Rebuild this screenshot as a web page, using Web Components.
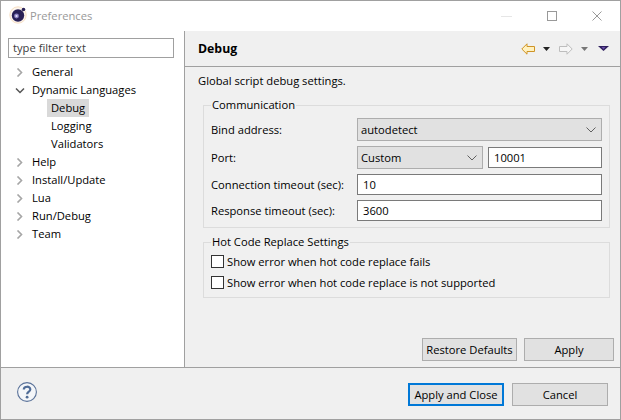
<!DOCTYPE html>
<html lang="en">
<head>
<meta charset="utf-8">
<title>Preferences</title>
<style>
  html, body { margin: 0; padding: 0; background: #ffffff; }
  body { font: 11.2px/16px "Open Sans", "Noto Sans", sans-serif; color: #000000; }
</style>
</head>
<body>
<pref-window></pref-window>

<script>
const chevronDown = `<svg width="10" height="6" viewBox="0 0 10 6"><path d="M.5.5 5 5 9.5.5" fill="none" stroke="#606060"/></svg>`;

class PrefButton extends HTMLElement {
  connectedCallback() {
    if (this.shadowRoot) return;
    this.attachShadow({ mode: "open" });
    this.shadowRoot.innerHTML = `
      <style>
        :host {
          display: flex;
          align-items: center;
          justify-content: center;
          box-sizing: border-box;
          height: 23px;
          width: var(--w, 90px);
          background: #e1e1e1;
          border: 1px solid #adadad;
        }
        :host([default]) {
          border: 2px solid #0078d7;
        }
      </style>
      <slot></slot>
    `;
  }
}

class PrefCombo extends HTMLElement {
  connectedCallback() {
    if (this.shadowRoot) return;
    this.attachShadow({ mode: "open" });
    this.shadowRoot.innerHTML = `
      <style>
        :host {
          display: flex;
          align-items: center;
          justify-content: space-between;
          box-sizing: border-box;
          height: 23px;
          padding: 0 5px 0 3px;
          background: #e1e1e1;
          border: 1px solid #adadad;
        }
        :host([narrow]) { width: 126px; }
        svg { display: block; }
      </style>
      <span><slot></slot></span>
      ${chevronDown}
    `;
  }
}

class PrefInput extends HTMLElement {
  connectedCallback() {
    if (this.shadowRoot) return;
    this.attachShadow({ mode: "open" });
    this.shadowRoot.innerHTML = `
      <style>
        :host {
          display: flex;
          align-items: center;
          box-sizing: border-box;
          height: 21px;
          padding: 0 5px;
          background: #ffffff;
          border: 1px solid #7a7a7a;
        }
        :host([filter]) {
          height: 20px;
          padding: 0 4px;
          border-color: #a0a0a0;
          color: #404040;
        }
      </style>
      <slot></slot>
    `;
  }
}

class PrefCheck extends HTMLElement {
  connectedCallback() {
    if (this.shadowRoot) return;
    this.attachShadow({ mode: "open" });
    this.shadowRoot.innerHTML = `
      <style>
        :host {
          display: flex;
          align-items: center;
          gap: 3px;
          height: 13px;
        }
        .box {
          box-sizing: border-box;
          width: 13px;
          height: 13px;
          background: #ffffff;
          border: 1px solid #333333;
        }
      </style>
      <div class="box"></div>
      <slot></slot>
    `;
  }
}

class PrefGroup extends HTMLElement {
  connectedCallback() {
    if (this.shadowRoot) return;
    this.attachShadow({ mode: "open" });
    this.shadowRoot.innerHTML = `
      <style>
        :host { display: block; }
        fieldset {
          margin: 0;
          padding: 5px 7px 6px;
          border: 1px solid #dcdcdc;
          min-width: 0;
        }
        legend {
          margin-left: 0;
          padding: 0 1px;
          line-height: 16px;
        }
      </style>
      <fieldset>
        <legend>${this.getAttribute("heading") || ""}</legend>
        <slot></slot>
      </fieldset>
    `;
  }
}

class TreeItem extends HTMLElement {
  connectedCallback() {
    if (this.shadowRoot) return;
    this.attachShadow({ mode: "open" });
    const open = this.hasAttribute("open");
    const leaf = this.hasAttribute("leaf");
    const twist = open
      ? `<path d="M1 2.5 5 6.5 9 2.5" fill="none" stroke="#555555" stroke-width="1.5"/>`
      : `<path d="M2.5 .5 6.5 4.5 2.5 8.5" fill="none" stroke="#a6a6a6" stroke-width="1.6"/>`;
    this.shadowRoot.innerHTML = `
      <style>
        :host {
          display: flex;
          align-items: center;
          height: 18px;
          padding-left: 8px;
        }
        :host([leaf]) { padding-left: 46px; }
        svg { display: block; flex: none; margin: 0 3px 0 6px; }
        .label { padding: 0 4px; line-height: 18px; }
        :host([selected]) .label { background: #d9d9d9; }
      </style>
      ${leaf ? "" : `<svg width="10" height="9" viewBox="0 0 10 9">${twist}</svg>`}
      <span class="label"><slot></slot></span>
    `;
  }
}

class NavToolbar extends HTMLElement {
  connectedCallback() {
    if (this.shadowRoot) return;
    this.attachShadow({ mode: "open" });
    this.shadowRoot.innerHTML = `
      <style>
        :host {
          display: flex;
          align-items: center;
          margin-left: auto;
        }
        svg { display: block; }
      </style>
      <svg width="14" height="12" viewBox="0 0 14 12" style="margin-right:8px">
        <path d="M.8 6 6 .8V3.5H13.5V8.5H6V11.2Z" fill="#fff1bf" stroke="#cf9426"/>
      </svg>
      <svg width="7" height="4" viewBox="0 0 7 4" style="margin-right:9px"><path d="M0 0H7L3.5 4Z" fill="#222222"/></svg>
      <svg width="14" height="12" viewBox="0 0 14 12" style="margin-right:8px">
        <path d="M13.2 6 8 .8V3.5H.5V8.5H8V11.2Z" fill="#f6f6f6" stroke="#bdbdbd"/>
      </svg>
      <svg width="7" height="4" viewBox="0 0 7 4" style="margin-right:10px"><path d="M0 0H7L3.5 4Z" fill="#777777"/></svg>
      <svg width="11" height="5" viewBox="0 0 11 5"><path d="M0 0H11L5.500 5Z" fill="#2e1f5e"/><path d="M3.500 1H7.500L5.500 3.500Z" fill="#6a4fa8"/></svg>
    `;
  }
}

class PrefWindow extends HTMLElement {
  connectedCallback() {
    if (this.shadowRoot) return;
    this.attachShadow({ mode: "open" });
    this.shadowRoot.innerHTML = `
      <style>
        :host {
          display: flex;
          flex-direction: column;
          box-sizing: border-box;
          width: 621px;
          height: 420px;
          background: #ffffff;
          border: 1px solid #a0a0a0;
          overflow: hidden;
        }
        svg { display: block; flex: none; }

        .title-bar {
          display: flex;
          align-items: center;
          height: 30px;
          flex: none;
          padding-left: 8px;
          color: #999999;
        }
        .title-bar .logo { margin-top: -3px; }
        .title-bar .name { margin-left: 3px; }
        .win-buttons {
          display: flex;
          align-items: center;
          margin-left: auto;
          margin-right: 18px;
          gap: 35px;
        }

        .main {
          display: flex;
          flex: 1;
          min-height: 0;
        }
        .left {
          box-sizing: border-box;
          width: 184px;
          flex: none;
          padding-top: 7px;
          border-right: 1px solid #a0a0a0;
        }
        .left pref-input {
          width: 166px;
          margin: 0 0 5px 7px;
        }

        .right {
          display: flex;
          flex-direction: column;
          flex: 1;
          min-width: 0;
          background: #f0f0f0;
        }
        .page-head {
          display: flex;
          align-items: center;
          box-sizing: border-box;
          height: 36px;
          flex: none;
          padding: 0 11px 0 13px;
          border-bottom: 1px solid #a0a0a0;
        }
        .page-head .heading {
          font-size: 12.300px;
          font-weight: 700;
        }
        .page-body {
          display: flex;
          flex-direction: column;
          flex: 1;
          min-height: 0;
          padding: 5px 6px 6px 0;
        }
        .desc {
          margin-left: 13px;
          line-height: 18px;
        }
        pref-group {
          margin: 7px 4px 0 18px;
        }
        pref-group + pref-group { margin-top: 6px; }
        .form {
          display: grid;
          grid-template-columns: 146px 1fr;
          gap: 5px 0;
          align-items: center;
        }
        .port {
          display: flex;
          gap: 5px;
          align-items: center;
        }
        .port pref-input { flex: 1; }
        .checks {
          display: flex;
          flex-direction: column;
          gap: 8px;
          padding-bottom: 2px;
        }
        .page-actions {
          display: flex;
          justify-content: flex-end;
          gap: 7px;
          margin-top: auto;
        }

        .footer {
          display: flex;
          align-items: flex-start;
          box-sizing: border-box;
          height: 52px;
          flex: none;
          padding: 15px 12px 0 16px;
          background: #f0f0f0;
          border-top: 1px solid #a0a0a0;
        }
        .footer .help { margin-top: -1px; }
        .footer .actions {
          display: flex;
          gap: 8px;
          margin-left: auto;
        }
      </style>

      <div class="title-bar">
        <svg class="logo" width="18" height="18" viewBox="0 0 18 18">
          <circle cx="9" cy="9" r="8.200" fill="#fdf6ee" stroke="#f3d3ae" stroke-width=".7"/>
          <circle cx="9" cy="9.500" r="6.200" fill="#2a2156"/>
          <circle cx="7.500" cy="10" r="2.400" fill="#8f84c4"/>
          <circle cx="7.500" cy="10" r="1.100" fill="#e9e6f6"/>
          <circle cx="14.500" cy="3.500" r="1.800" fill="#2a2156"/>
        </svg>
        <span class="name">Preferences</span>
        <div class="win-buttons">
          <svg width="11" height="1" viewBox="0 0 11 1"><path d="M0 .5H11" stroke="#e6e6e6"/></svg>
          <svg width="10" height="10" viewBox="0 0 10 10"><rect x=".5" y=".5" width="9" height="9" fill="none" stroke="#999999"/></svg>
          <svg width="10" height="10" viewBox="0 0 10 10"><path d="M.5.5 9.500 9.500M9.500.5.500 9.500" stroke="#999999"/></svg>
        </div>
      </div>

      <div class="main">
        <div class="left">
          <pref-input filter>type filter text</pref-input>
          <tree-item>General</tree-item>
          <tree-item open>Dynamic Languages</tree-item>
          <tree-item leaf selected>Debug</tree-item>
          <tree-item leaf>Logging</tree-item>
          <tree-item leaf>Validators</tree-item>
          <tree-item>Help</tree-item>
          <tree-item>Install/Update</tree-item>
          <tree-item>Lua</tree-item>
          <tree-item>Run/Debug</tree-item>
          <tree-item>Team</tree-item>
        </div>

        <div class="right">
          <div class="page-head">
            <span class="heading">Debug</span>
            <nav-toolbar></nav-toolbar>
          </div>
          <div class="page-body">
            <div class="desc">Global script debug settings.</div>
            <pref-group heading="Communication">
              <div class="form">
                <span>Bind address:</span>
                <pref-combo>autodetect</pref-combo>
                <span>Port:</span>
                <div class="port">
                  <pref-combo narrow>Custom</pref-combo>
                  <pref-input>10001</pref-input>
                </div>
                <span>Connection timeout (sec):</span>
                <pref-input>10</pref-input>
                <span>Response timeout (sec):</span>
                <pref-input>3600</pref-input>
              </div>
            </pref-group>
            <pref-group heading="Hot Code Replace Settings">
              <div class="checks">
                <pref-check>Show error when hot code replace fails</pref-check>
                <pref-check>Show error when hot code replace is not supported</pref-check>
              </div>
            </pref-group>
            <div class="page-actions">
              <pref-button style="--w:95px">Restore Defaults</pref-button>
              <pref-button style="--w:90px">Apply</pref-button>
            </div>
          </div>
        </div>
      </div>

      <div class="footer">
        <svg class="help" width="20" height="20" viewBox="0 0 20 20">
          <circle cx="10" cy="10" r="9.400" fill="#f4f6f9" stroke="#5a7299" stroke-width="1.100"/>
          <path d="M6.800 7.600C6.800 3.800 13.300 3.800 13.300 7.400C13.300 9.700 10.100 9.700 10.100 12.300" fill="none" stroke="#4f6c97" stroke-width="2.200"/>
          <circle cx="10.100" cy="15.200" r="1.400" fill="#4f6c97"/>
        </svg>
        <div class="actions">
          <pref-button default style="--w:96px">Apply and Close</pref-button>
          <pref-button style="--w:96px">Cancel</pref-button>
        </div>
      </div>
    `;
  }
}

customElements.define("pref-button", PrefButton);
customElements.define("pref-combo", PrefCombo);
customElements.define("pref-input", PrefInput);
customElements.define("pref-check", PrefCheck);
customElements.define("pref-group", PrefGroup);
customElements.define("tree-item", TreeItem);
customElements.define("nav-toolbar", NavToolbar);
customElements.define("pref-window", PrefWindow);
</script>
</body>
</html>
